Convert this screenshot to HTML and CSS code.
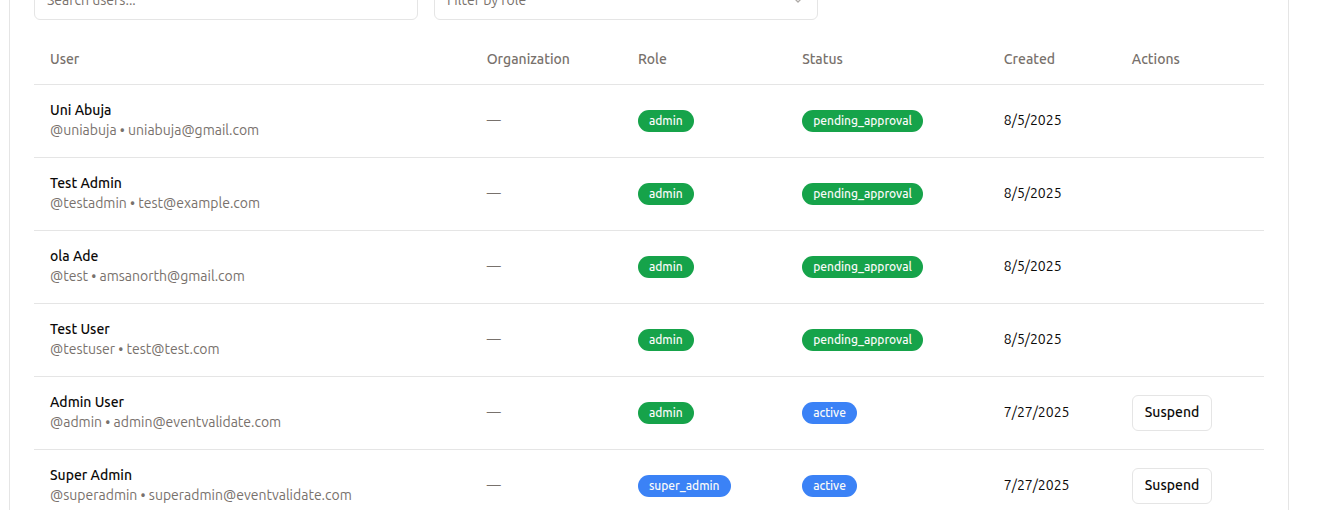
FILE: index.html
```html
<!DOCTYPE html>
<html lang="en">
<head>
<meta charset="utf-8">
<title>Users</title>
<link rel="stylesheet" href="styles.css">
</head>
<body>
<main class="page">
  <section class="card">
    <form class="filters">
      <input class="field" type="text" aria-label="Search users" placeholder="Search users...">
      <div class="select-wrap">
        <select class="field field-select" aria-label="Filter by role">
          <option>Filter by role</option>
        </select>
        <svg class="chevron" viewBox="0 0 24 24" fill="none" stroke="currentColor" stroke-width="2" stroke-linecap="round" stroke-linejoin="round" aria-hidden="true"><path d="m6 9 6 6 6-6"/></svg>
      </div>
    </form>
    <table class="users">
      <colgroup>
        <col class="col-user"><col class="col-org"><col class="col-role"><col class="col-status"><col class="col-created"><col class="col-actions">
      </colgroup>
      <thead>
        <tr><th scope="col">User</th><th scope="col">Organization</th><th scope="col">Role</th><th scope="col">Status</th><th scope="col">Created</th><th scope="col">Actions</th></tr>
      </thead>
      <tbody>
        <tr>
          <td class="text"><div class="name">Uni Abuja</div><div class="contact">@uniabuja • uniabuja@gmail.com</div></td>
          <td class="text org">—</td>
          <td><span class="badge green">admin</span></td>
          <td><span class="badge green">pending_approval</span></td>
          <td class="text">8/5/2025</td>
          <td></td>
        </tr>
        <tr>
          <td class="text"><div class="name">Test Admin</div><div class="contact">@testadmin • test@example.com</div></td>
          <td class="text org">—</td>
          <td><span class="badge green">admin</span></td>
          <td><span class="badge green">pending_approval</span></td>
          <td class="text">8/5/2025</td>
          <td></td>
        </tr>
        <tr>
          <td class="text"><div class="name">ola Ade</div><div class="contact">@test • amsanorth@gmail.com</div></td>
          <td class="text org">—</td>
          <td><span class="badge green">admin</span></td>
          <td><span class="badge green">pending_approval</span></td>
          <td class="text">8/5/2025</td>
          <td></td>
        </tr>
        <tr>
          <td class="text"><div class="name">Test User</div><div class="contact">@testuser • test@test.com</div></td>
          <td class="text org">—</td>
          <td><span class="badge green">admin</span></td>
          <td><span class="badge green">pending_approval</span></td>
          <td class="text">8/5/2025</td>
          <td></td>
        </tr>
        <tr>
          <td class="text"><div class="name">Admin User</div><div class="contact">@admin • admin@eventvalidate.com</div></td>
          <td class="text org">—</td>
          <td><span class="badge green">admin</span></td>
          <td><span class="badge blue">active</span></td>
          <td class="text">7/27/2025</td>
          <td><button class="button" type="button">Suspend</button></td>
        </tr>
        <tr>
          <td class="text"><div class="name">Super Admin</div><div class="contact">@superadmin • superadmin@eventvalidate.com</div></td>
          <td class="text org">—</td>
          <td><span class="badge blue">super_admin</span></td>
          <td><span class="badge blue">active</span></td>
          <td class="text">7/27/2025</td>
          <td><button class="button" type="button">Suspend</button></td>
        </tr>
      </tbody>
    </table>
  </section>
</main>
</body>
</html>
```

FILE: styles.css
```css
*, *::before, *::after { box-sizing: border-box; }

body {
  margin: 0;
  background: #fff;
  color: #0c0a09;
  font: 14px/20px Ubuntu, "Noto Sans", sans-serif;
}

.page {
  height: 100vh;
  overflow: hidden;
  padding: 0 30px 0 9px;
}

/* The list is shown scrolled halfway past the filter row. */
.card {
  margin-top: -20px;
  padding: 0 24px;
  border: solid #e5e5e5;
  border-width: 0 1px;
}

.filters {
  display: flex;
  gap: 16px;
  margin-bottom: 16px;
}

.field {
  width: 100%;
  max-width: 384px;
  height: 40px;
  padding: 8px 12px;
  border: 1px solid #e5e5e5;
  border-radius: 6px;
  background: #fff;
  color: #78716c;
  font: inherit;
}

.field::placeholder { color: #78716c; opacity: 1; }

.select-wrap {
  position: relative;
  width: 100%;
  max-width: 384px;
}

.field-select {
  display: block;
  appearance: none;
}

.chevron {
  position: absolute;
  top: 12px;
  right: 12px;
  width: 16px;
  height: 16px;
  color: #78716c;
  opacity: 0.6;
  pointer-events: none;
}

.users {
  width: 100%;
  table-layout: fixed;
  border-collapse: separate;
  border-spacing: 0;
}

.col-user { width: 35.5%; }
.col-org { width: 12.3%; }
.col-role { width: 13.35%; }
.col-status { width: 16.4%; }
.col-created { width: 10.4%; }
.col-actions { width: 12.05%; }

th, td {
  border-bottom: 1px solid #e5e5e5;
  text-align: left;
  vertical-align: middle;
}

th {
  height: 49px;
  padding: 0 16px 2px;
  color: #78716c;
  font-weight: 500;
}

td {
  height: 73px;
  padding: 0 16px;
}

.text { padding-bottom: 2px; }

.name { font-weight: 500; }

.contact {
  color: #78716c;
  white-space: nowrap;
}

.org { color: #78716c; }

.badge {
  display: inline-flex;
  padding: 2px 10px;
  border: 1px solid transparent;
  border-radius: 11px;
  color: #fafaf9;
  font-size: 12px;
  line-height: 16px;
  font-weight: 500;
  vertical-align: middle;
}

.green { background-color: #16a34a; }
.blue { background-color: #3b82f6; }

.button {
  height: 36px;
  padding: 0 12px 2px;
  border: 1px solid #e5e5e5;
  border-radius: 6px;
  background: #fff;
  color: inherit;
  font: inherit;
  font-weight: 500;
}
```
